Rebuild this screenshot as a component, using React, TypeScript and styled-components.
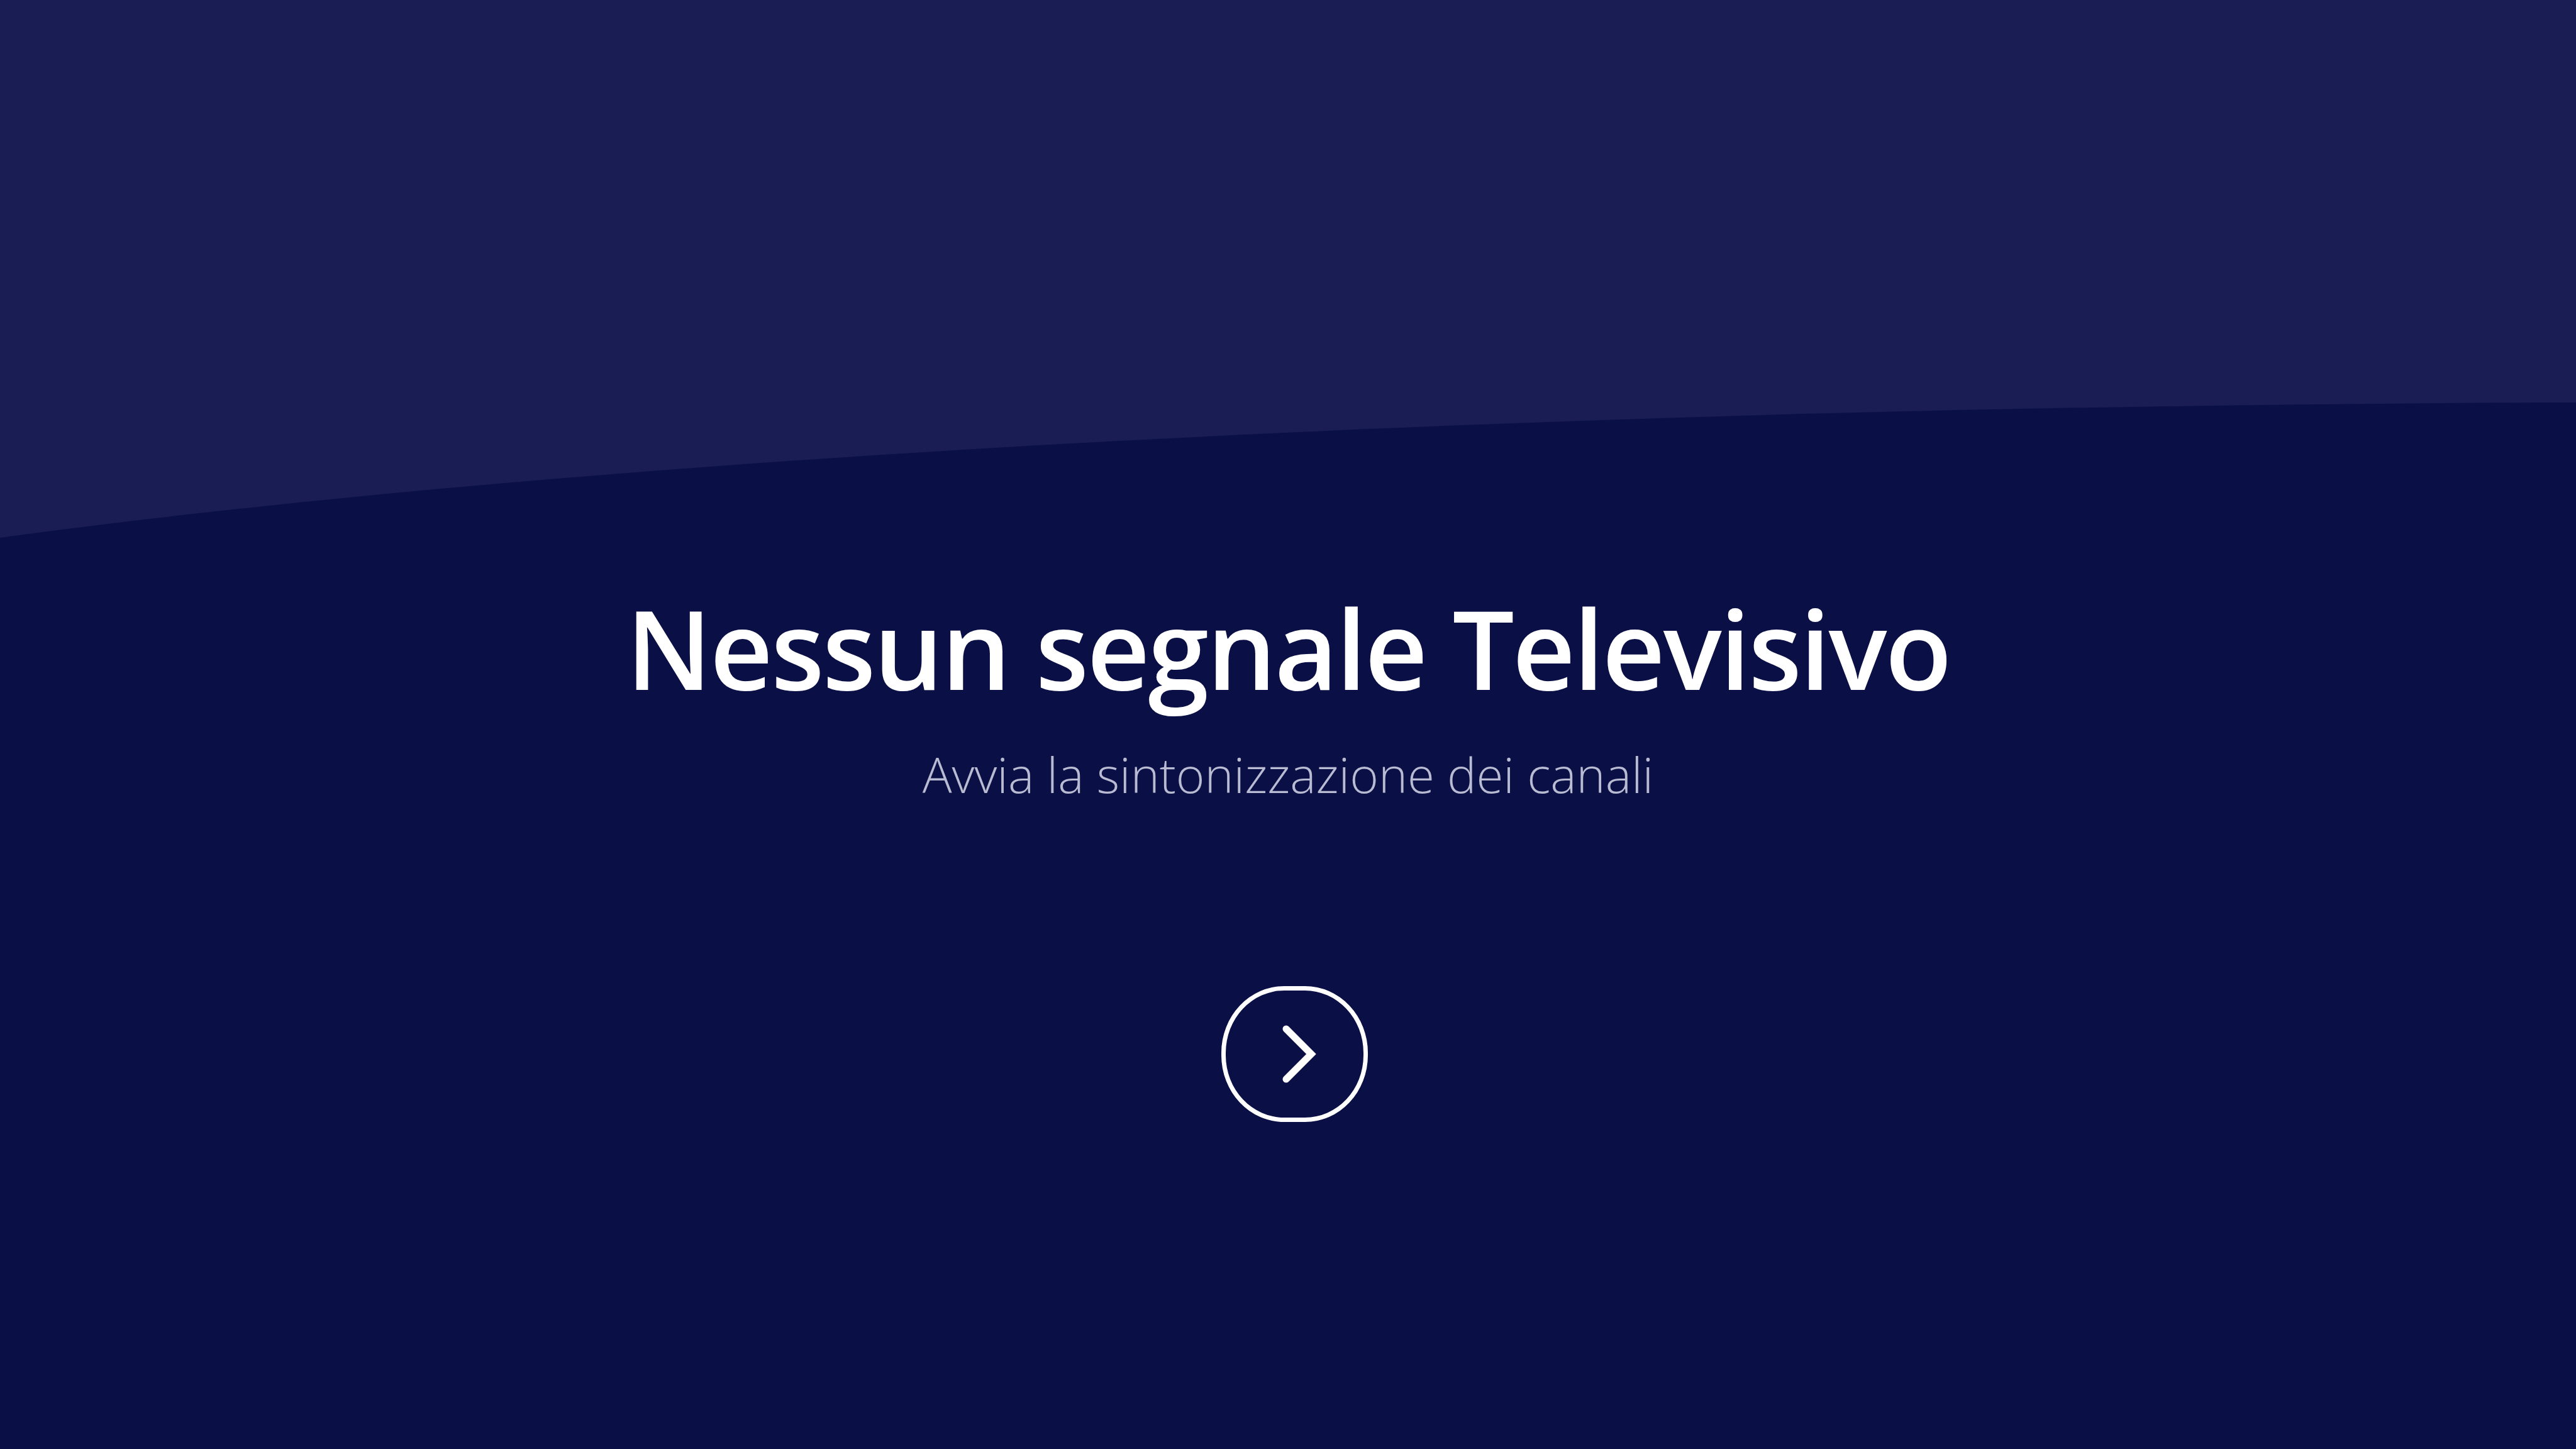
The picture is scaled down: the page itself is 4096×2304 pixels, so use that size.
import styled, { createGlobalStyle } from "styled-components"

const GlobalStyle = createGlobalStyle`
    html, body {
        margin: 0;
        padding: 0;
        background: #0a0f45;
    }
`

export default function App() {
    return (
        <Screen>
            <GlobalStyle />
            <Backdrop viewBox="0 0 4096 2304" preserveAspectRatio="none">
                <path d="M0 0 H4096 V640 C2500 645 1000 720 0 855 Z" fill="#191d53" />
            </Backdrop>

            <Content>
                <Title>Nessun segnale Televisivo</Title>
                <Subtitle>Avvia la sintonizzazione dei canali</Subtitle>

                <NextButton aria-label="avanti">
                    <svg width="60" height="100" viewBox="0 0 60 100">
                        <path d="M10 10 L50 50 L10 90" fill="none" stroke="#fff" strokeWidth="11" strokeLinecap="round" strokeLinejoin="miter" />
                    </svg>
                </NextButton>
            </Content>
        </Screen>
    )
}

const Screen = styled.main`
    position: relative;
    width: 4096px;
    height: 2304px;
    overflow: hidden;
    background: #0a0f45;
    font-family: 'Open Sans', 'Noto Sans', sans-serif;
`

const Backdrop = styled.svg`
    position: absolute;
    inset: 0;
    width: 100%;
    height: 100%;
`

const Content = styled.section`
    position: relative;
    display: flex;
    flex-direction: column;
    align-items: center;
    padding-top: 920px;
`

const Title = styled.h1`
    margin: 0;
    color: #fff;
    font-size: 174px;
    font-weight: 600;
    line-height: 220px;
    letter-spacing: -3px;
`

const Subtitle = styled.p`
    margin: 0;
    margin-top: 41px;
    color: #b9bbd2;
    font-size: 78px;
    font-weight: 300;
    line-height: 100px;
`

const NextButton = styled.button`
    margin-top: 287px;
    margin-left: 20px;
    width: 233px;
    height: 216px;
    border: 7px solid #fff;
    border-radius: 100px / 106px;
    background: transparent;
    display: flex;
    align-items: center;
    justify-content: center;
    padding: 0 0 0 14px;
    cursor: pointer;
`
